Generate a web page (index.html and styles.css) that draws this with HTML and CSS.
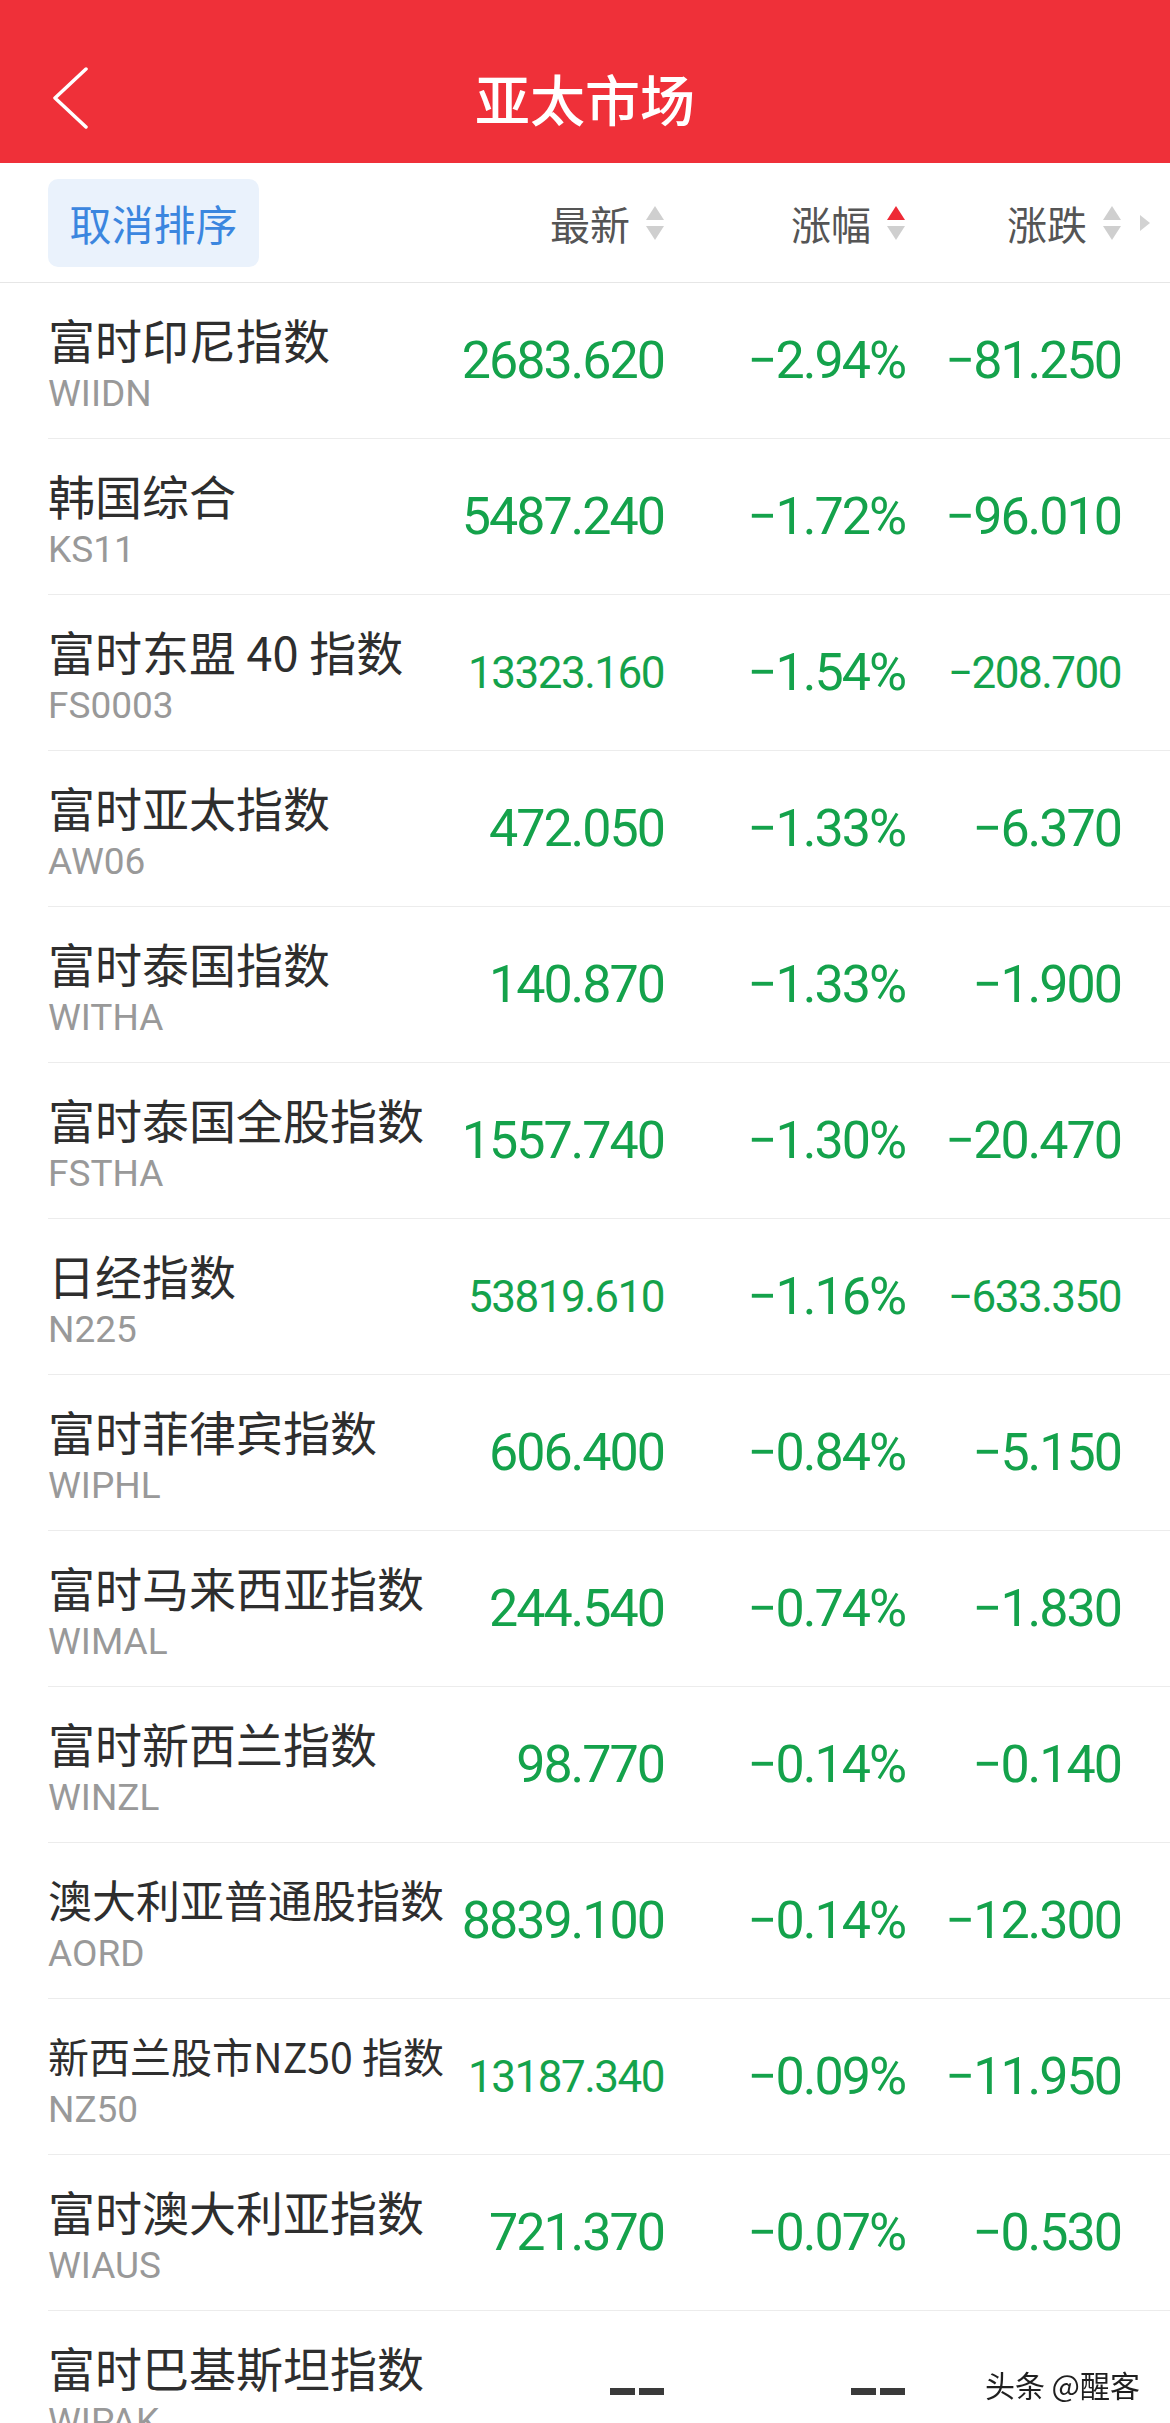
FILE: index.html
```html
<!DOCTYPE html>
<html lang="zh-CN">
<head>
    <meta charset="UTF-8">
    <meta name="viewport" content="width=device-width, initial-scale=1.0">
    <title>亚太市场</title>
    <link rel="stylesheet" href="styles.css">
</head>
<body>
    <div class="nav">
        <div class="back">
            <svg width="40" height="62" viewBox="0 0 40 62">
                <path d="M36 2 L5 31 L36 60" fill="none" stroke="#fff" stroke-width="3.5" stroke-linecap="round" stroke-linejoin="round"/>
            </svg>
        </div>
        <div class="title">亚太市场</div>
        <div class="nav-side"></div>
    </div>

    <div class="sortbar">
        <div><span class="cancel">取消排序</span></div>
        <div class="sort-col">最新<span class="arrows"><i class="up"></i><i class="down"></i></span></div>
        <div class="sort-col">涨幅<span class="arrows"><i class="up active"></i><i class="down"></i></span></div>
        <div class="sort-col">涨跌<span class="arrows"><i class="up"></i><i class="down"></i></span></div>
        <div class="more"><i></i></div>
    </div>

    <div class="list">
        <div class="row">
            <div class="name"><div class="cn">富时印尼指数</div><div class="code">WIIDN</div></div>
            <div class="num">2683.620</div>
            <div class="num">−2.94%</div>
            <div class="num">−81.250</div>
        </div>
        <div class="row">
            <div class="name"><div class="cn">韩国综合</div><div class="code">KS11</div></div>
            <div class="num">5487.240</div>
            <div class="num">−1.72%</div>
            <div class="num">−96.010</div>
        </div>
        <div class="row">
            <div class="name"><div class="cn">富时东盟 40 指数</div><div class="code">FS0003</div></div>
            <div class="num sm">13323.160</div>
            <div class="num">−1.54%</div>
            <div class="num sm">−208.700</div>
        </div>
        <div class="row">
            <div class="name"><div class="cn">富时亚太指数</div><div class="code">AW06</div></div>
            <div class="num">472.050</div>
            <div class="num">−1.33%</div>
            <div class="num">−6.370</div>
        </div>
        <div class="row">
            <div class="name"><div class="cn">富时泰国指数</div><div class="code">WITHA</div></div>
            <div class="num">140.870</div>
            <div class="num">−1.33%</div>
            <div class="num">−1.900</div>
        </div>
        <div class="row">
            <div class="name"><div class="cn">富时泰国全股指数</div><div class="code">FSTHA</div></div>
            <div class="num">1557.740</div>
            <div class="num">−1.30%</div>
            <div class="num">−20.470</div>
        </div>
        <div class="row">
            <div class="name"><div class="cn">日经指数</div><div class="code">N225</div></div>
            <div class="num sm">53819.610</div>
            <div class="num">−1.16%</div>
            <div class="num sm">−633.350</div>
        </div>
        <div class="row">
            <div class="name"><div class="cn">富时菲律宾指数</div><div class="code">WIPHL</div></div>
            <div class="num">606.400</div>
            <div class="num">−0.84%</div>
            <div class="num">−5.150</div>
        </div>
        <div class="row">
            <div class="name"><div class="cn">富时马来西亚指数</div><div class="code">WIMAL</div></div>
            <div class="num">244.540</div>
            <div class="num">−0.74%</div>
            <div class="num">−1.830</div>
        </div>
        <div class="row">
            <div class="name"><div class="cn">富时新西兰指数</div><div class="code">WINZL</div></div>
            <div class="num">98.770</div>
            <div class="num">−0.14%</div>
            <div class="num">−0.140</div>
        </div>
        <div class="row">
            <div class="name"><div class="cn long">澳大利亚普通股指数</div><div class="code">AORD</div></div>
            <div class="num">8839.100</div>
            <div class="num">−0.14%</div>
            <div class="num">−12.300</div>
        </div>
        <div class="row">
            <div class="name"><div class="cn longer">新西兰股市NZ50 指数</div><div class="code">NZ50</div></div>
            <div class="num sm">13187.340</div>
            <div class="num">−0.09%</div>
            <div class="num">−11.950</div>
        </div>
        <div class="row">
            <div class="name"><div class="cn">富时澳大利亚指数</div><div class="code">WIAUS</div></div>
            <div class="num">721.370</div>
            <div class="num">−0.07%</div>
            <div class="num">−0.530</div>
        </div>
        <div class="row">
            <div class="name"><div class="cn">富时巴基斯坦指数</div><div class="code">WIPAK</div></div>
            <div class="num"><span class="dash"></span><span class="dash"></span></div>
            <div class="num"><span class="dash"></span><span class="dash"></span></div>
            <div class="num"><span class="dash"></span><span class="dash"></span></div>
        </div>
    </div>

    <div class="watermark">头条 @醒客</div>
</body>
</html>
```

FILE: styles.css
```css
body {
    margin: 0;
    padding: 0;
    background-color: #fff;
    font-family: "Noto Sans CJK SC", sans-serif;
    overflow: hidden;
}

.nav {
    display: flex;
    align-items: center;
    height: 163px;
    padding-top: 32px;
    box-sizing: border-box;
    background-color: #ef3039;
}

.back {
    width: 120px;
    padding-left: 50px;
    box-sizing: border-box;
    display: flex;
}

.nav-side {
    width: 120px;
}

.title {
    flex: 1;
    text-align: center;
    color: #fff;
    font-size: 55px;
    line-height: 1;
    font-weight: 500;
}

.sortbar {
    display: grid;
    grid-template-columns: 392px 224px 241px 216px 49px;
    align-items: center;
    height: 120px;
    padding-left: 48px;
    box-sizing: border-box;
    border-bottom: 1px solid #e6e6e6;
}

.cancel {
    display: inline-block;
    width: 211px;
    height: 88px;
    line-height: 88px;
    text-align: center;
    border-radius: 10px;
    background-color: #eaf2fc;
    color: #3b86df;
    font-size: 42px;
}

.sort-col {
    display: flex;
    align-items: center;
    justify-content: flex-end;
    gap: 16px;
    color: #555;
    font-size: 40px;
    line-height: 1;
}

.arrows {
    display: flex;
    flex-direction: column;
    gap: 6px;
}

.arrows i {
    display: block;
    width: 0;
    height: 0;
    border-left: 9.5px solid transparent;
    border-right: 9.5px solid transparent;
}

.arrows .up {
    border-bottom: 14px solid #cfcfcf;
}

.arrows .up.active {
    border-bottom-color: #ee2a36;
}

.arrows .down {
    border-top: 14px solid #cfcfcf;
}

.more {
    padding-left: 19px;
    display: flex;
}

.more i {
    display: block;
    width: 0;
    height: 0;
    border-top: 8.5px solid transparent;
    border-bottom: 8.5px solid transparent;
    border-left: 10px solid #d2d2d2;
}

.row {
    display: grid;
    grid-template-columns: 392px 224px 241px 216px;
    align-items: center;
    height: 156px;
    margin-left: 48px;
    box-sizing: border-box;
    border-bottom: 1px solid #ececec;
}

.name {
    align-self: start;
    padding-top: 28px;
    white-space: nowrap;
}

.cn {
    color: #2e2e2e;
    font-size: 47px;
    line-height: 56px;
}

.cn.long {
    font-size: 44px;
}

.cn.longer {
    font-size: 41px;
}

.code {
    margin-top: 5px;
    color: #999;
    font-family: Roboto, "Noto Sans", sans-serif;
    font-size: 37px;
    line-height: 44px;
}

.num {
    text-align: right;
    color: #14a24b;
    font-family: Roboto, "Noto Sans", sans-serif;
    font-size: 52px;
    line-height: 52px;
    letter-spacing: -2px;
    white-space: nowrap;
}

.num.sm {
    font-size: 44px;
    letter-spacing: -1.5px;
}

.dash {
    display: inline-block;
    width: 25px;
    height: 7px;
    margin-left: 4px;
    background-color: #3a3a3a;
    vertical-align: middle;
}

.watermark {
    position: fixed;
    right: 26px;
    bottom: 18px;
    padding: 2px 4px;
    background-color: #fff;
    color: #1f1f1f;
    font-size: 30px;
    line-height: 38px;
}
```
